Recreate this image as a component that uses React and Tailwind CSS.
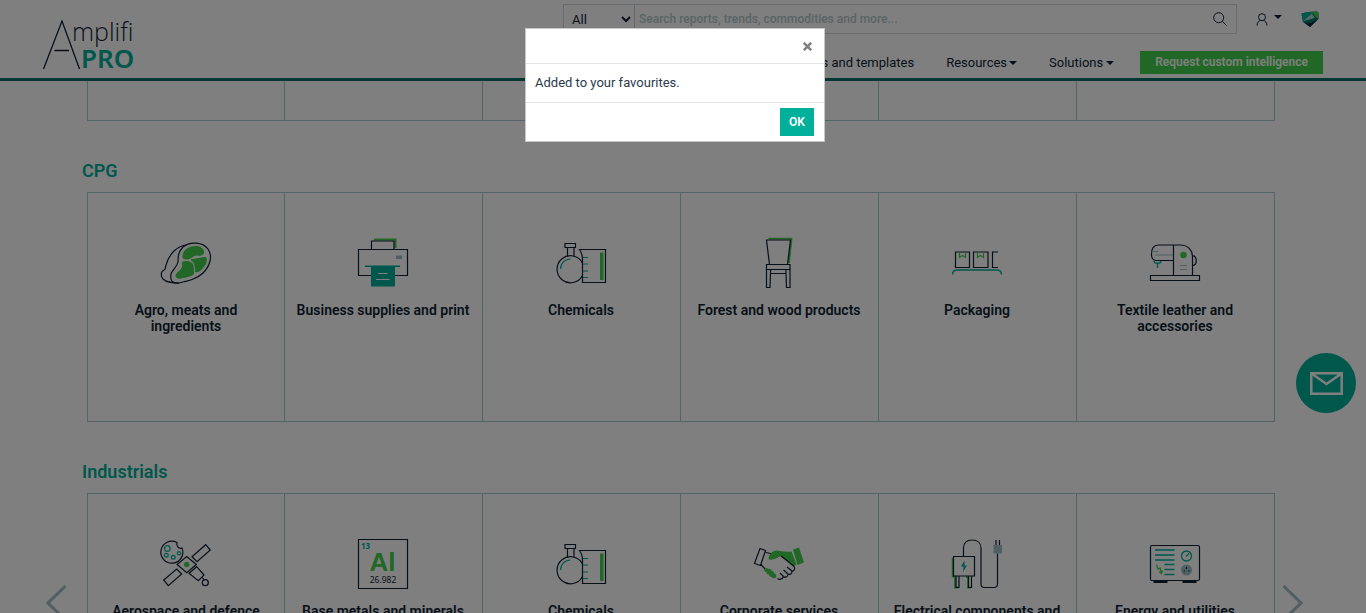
import React from "react";

const INK = "#0f1f33";
const TEAL = "#00b09b";
const GREEN = "#43cf4a";
const GREY = "#9fbfc6";

function Icon({ children }) {
  return (
    <svg
      aria-hidden="true"
      viewBox="0 0 50 50"
      className="h-[50px] w-[50px] shrink-0 overflow-visible"
      fill="none"
      stroke={INK}
      strokeWidth="1.200"
    >
      {children}
    </svg>
  );
}

const Steak = () => (
  <Icon>
    <path d="M22 9C29 3 42 4 47 11c5 7 2 17-5 24-6 6-15 8-24 10-7 1-9-3-8-9 1-4 6-7 7-12 0-5 0-10 5-15Z" />
    <path d="M25 7C16 8 8 16 5 27c-1 3 0 4-2 5-4 2-3 7-1 9 4 4 10 4 16 4" />
    <path
      d="M22 16c1-5 6-8 13-8 5 0 9 3 8 7-2 5-6 1-10 3-3 3-7 4-10 3-2-1-2-3-1-5Z"
      fill={GREEN}
      stroke="none"
    />
    <path
      d="M31 21c3 0 9-2 14-2 2 4 0 8-3 11-2 3-5 5-8 4 0-4 0-7-2-10-2-1-3-3-1-3Z"
      fill={GREEN}
      stroke="none"
    />
    <path
      d="M21 24c4-2 9-1 11 2 1 3 1 7 1 10-3 3-7 3-11 4-4 2-9 0-7-4 1-2 5-4 6-7 1-2-1-4 0-5Z"
      fill={GREEN}
      stroke="none"
    />
  </Icon>
);

const Printer = () => (
  <Icon>
    <path d="M16 1.500h21.500V10" stroke={GREEN} strokeWidth="2" />
    <path d="M13.500 11.500v-8.500h22.500v8.500" />
    <path d="M.5 11.500h49v26H.5Z" />
    <path d="M38 17.500h6v3.500h-6Z" fill={GREY} stroke="none" />
    <path d="M7 27.500h35v1.500H7Z" fill={TEAL} stroke="none" />
    <path d="M13 29h24v19.500H13Z" fill={TEAL} stroke="none" />
    <path d="M20 35.500h9.500M18 41.500h13.500" stroke="white" />
  </Icon>
);

const Chemistry = () => (
  <Icon>
    <path d="M26.500 25a13.500 13.500 0 1 0 0 12.500" />
    <path d="M11.500 18.500v-9h6.500v9M9 5.500h10.500v4H9Z" />
    <path d="M4.500 31a10 10 0 0 1 10-10" stroke={TEAL} />
    <path d="M23.500 11.500h26v33h-23V22c0-5-1-8-3-10.500Z" />
    <path d="M27 19.500h5M27 26h5M27 33h5M27 39.500h5" stroke={TEAL} />
    <path d="M44 14.500h3.500V42H44Z" fill={GREEN} stroke="none" />
  </Icon>
);

const Chair = () => (
  <Icon>
    <path d="M14.500 .7h23L35 25" stroke={GREEN} strokeWidth="1.800" />
    <path d="M12.500 2h24l-3 24.500h-18Z" />
    <path d="M12.500 26.500H36v5H12.500Z" />
    <path d="M12.500 31.500v18h3.500l.6-18M36 31.500v18h-3.500l-.6-18M16.500 35.500h16" />
  </Icon>
);

const Boxes = () => (
  <Icon>
    <path d="M3.500 14h14v15.500h-14ZM21.500 14h14.500v15.500H21.500ZM46 14h-5.500v15.500H46" />
    <path d="M7.500 14v5.500l3-2 3 2V14M25.500 14v5.500l3-2 3 2V14" stroke={GREEN} />
    <path d="M.5 36.500c0-3 2-4.500 5-4.500h39c3 0 5 1.500 5 4.500" stroke={TEAL} strokeWidth="1.400" />
  </Icon>
);

const SewingMachine = () => (
  <Icon>
    <path d="M23.500 22.500H6c-3 0-4.500-3-4.500-6C1.500 11 3 7 9 7h21c8 0 12.500 5 12.500 12v18.500M23.500 7v30.500" />
    <path d="M.5 37.500h49v5H.5Z" />
    <path d="M42.500 18c5-1 5 10 0 9.500" />
    <path d="M2 13.500h6.500M5 17h18M30 27.500h7M30 31.500h7" stroke={GREY} />
    <circle cx="33.500" cy="17" r="3.200" fill={GREEN} stroke="none" />
    <path d="M4 23c0 3 7 3 7 0M7.500 25.500V30" stroke={TEAL} strokeWidth="1.300" />
  </Icon>
);

const Satellite = () => (
  <Icon>
    <path d="M16 3.500A11 11 0 1 0 21 9c-3 1-6-1-5-5.500Z" />
    <g stroke={TEAL}>
      <circle cx="6.300" cy="9.500" r="2.800" />
      <circle cx="5.300" cy="16.300" r="1.900" />
      <circle cx="12.300" cy="18.300" r="1.900" />
      <circle cx="18" cy="14.300" r="1.700" />
    </g>
    <path d="m25.700 17.500 9.600 8-9.600 8.300-9.600-8.300Z" />
    <circle cx="25.700" cy="25.500" r="2.700" fill={GREEN} stroke="none" />
    <path d="m31 17.700 13.700-12 4.600 5.300L36 22.700Z" />
    <path d="m2.700 41 13-11 5 5L7.300 46.700Z" />
    <path d="m35.700 27.700 7.300 8.300-5.700 5.700-9.300-7.400ZM41 38l2 3" />
    <circle cx="44.300" cy="43.700" r="3" />
  </Icon>
);

const Aluminium = () => (
  <Icon>
    <path d="M.5 .5h49v49H.5Z" />
    <g stroke="none" className="font-['Noto_Sans',sans-serif]">
      <text x="3" y="9.500" fontSize="8" fontWeight="700" fill={TEAL}>
        13
      </text>
      <text
        x="24.500"
        y="32"
        fontSize="26"
        fontWeight="700"
        fill={GREEN}
        textAnchor="middle"
        className="font-['Liberation_Sans',sans-serif]"
      >
        Al
      </text>
      <text x="25" y="44" fontSize="8.500" fontWeight="400" fill={INK} textAnchor="middle">
        26.982
      </text>
    </g>
  </Icon>
);

const Handshake = () => (
  <Icon>
    <path d="m6 9.500 5.500 2-5 15-6-2Z" />
    <path d="m39 10.500 6-2 5 15-6.500 2.500Z" fill={GREEN} stroke="none" />
    <path
      d="M14.500 19c1-4 4-7 8-7.500 4 0 7 2 15 1l5 13-3 2C35 24 31 20 27 17c-3 1-5 3-9 3.500-2 .5-4 0-3.500-1.500Z"
      fill={GREEN}
      stroke="none"
    />
    <path d="M11.500 13.500 17 14.500M7 25.500l4 4.500" />
    <path
      d="M10 31c1-2 3-3 4-1 2-1 4 1 3.500 2 2 0 3 1 2.500 2.500 2 0 3 2 2 4-2 1-4 1-4-.5-2 0-3-1-3-2.500-2 0-3-1-2.500-2.500-1 0-2-1-2.500-2Z"
      fill={GREEN}
      stroke="none"
    />
    <path d="M27 17c4 3 9 7 13 10.500 1.500 2 0 5-2 4.500 0 3-2 4-4 3 0 3-3 4-4.500 2.500-1 3-4 3.500-6 2M38 32l-5-4M34 35l-4.500-4M29.500 37.500 26 34" />
  </Icon>
);

const Charger = () => (
  <Icon>
    <path d="M.7 19v18.500H3v11h3M14 38h2v10.500h3" stroke={GREEN} strokeWidth="1.800" />
    <path d="M1.500 17.500h21v19.500h-21ZM4 37v11.500h3V37M16.500 37v11.500h3V37" />
    <path d="M11.500 17.500V9c0-5 3-8 8.500-8s9 3 9 8v36c0 2 1.500 3.500 3.500 3.500h9.500c2 0 3.500-1 3.500-3.500V14.500" />
    <path d="M41.500 6h8.500v8.500h-8.500Z" fill={GREY} stroke="none" />
    <path d="M44 1v5M47.500 1v5" />
    <path d="m12.500 21.500-3.500 6h2.500l-.5 5.500 4-6.500h-2.500Z" fill={TEAL} stroke="none" />
  </Icon>
);

const Generator = () => (
  <Icon>
    <rect x=".5" y="6.500" width="49" height="35" rx="1.500" />
    <path d="M3.500 42h14v2h-14ZM32.500 42h14v2h-14Z" fill={INK} stroke="none" />
    <path d="M5 11h19.500M5 16h19.500M5 21h19.500M14.500 25.500h10M14.500 30.500h10M14.500 35.500h10" stroke={TEAL} strokeWidth="1.300" />
    <circle cx="36.500" cy="17" r="5" stroke={TEAL} strokeWidth="1.300" />
    <path d="m36 17.500 3-3" stroke={TEAL} strokeWidth="1.300" />
    <circle cx="36.500" cy="31" r="5.500" fill={GREY} stroke="none" />
    <path d="M33.500 32h1.500M38 32h1.500M36.500 28v2" />
    <path d="m6.500 25.500 1.500 4.500 2-1 1.500 5M9 32.500l2.500 2 1-3" stroke={GREEN} strokeWidth="1.300" />
  </Icon>
);

const CPG = [
  ["Agro, meats and ingredients", Steak],
  ["Business supplies and print", Printer],
  ["Chemicals", Chemistry],
  ["Forest and wood products", Chair],
  ["Packaging", Boxes],
  ["Textile leather and accessories", SewingMachine],
];

const INDUSTRIALS = [
  ["Aerospace and defence", Satellite],
  ["Base metals and minerals", Aluminium],
  ["Chemicals", Chemistry],
  ["Corporate services", Handshake],
  ["Electrical components and equipment", Charger],
  ["Energy and utilities", Generator],
];

function Card({ title, Art }) {
  return (
    <a
      href="#"
      className="flex h-[228px] flex-col items-center gap-[14px] border-r border-[#a9c9cf] pt-[45px] pr-px text-center text-sm leading-4 font-semibold text-[#0f1f33] first:border-l first:pr-0"
    >
      <Art />
      <span className="max-w-[175px]">{title}</span>
    </a>
  );
}

function Section({ title, items, children }) {
  return (
    <section className="mb-[38px]">
      <h2 className="mb-[9px] text-lg leading-6 font-semibold text-[#00b09b]">{title}</h2>
      <div className="relative ml-[5px]">
        <div className="grid grid-cols-6 border-y border-[#a9c9cf]">
          {items.map(([name, Art]) => (
            <Card key={name} title={name} Art={Art} />
          ))}
        </div>
        {children}
      </div>
    </section>
  );
}

function Caret() {
  return (
    <svg aria-hidden="true" viewBox="0 0 8 4" className="h-1 w-2" fill={INK}>
      <path d="M0 0h8L4 4Z" />
    </svg>
  );
}

function Logo() {
  return (
    <svg role="img" aria-label="Amplifi PRO" viewBox="0 0 92 52" className="h-[52px] w-[92px] overflow-visible">
      <path d="M.5 51 19 3l17.500 48M11.500 32.500H26" fill="none" stroke={INK} strokeWidth="1.300" />
      <text x="29" y="23" fontSize="25" fontWeight="300" fill={INK} className="font-['Open_Sans',sans-serif]">
        mplifi
      </text>
      <text x="38" y="50" fontSize="26" fontWeight="600" fill={TEAL} className="font-['Noto_Sans',sans-serif]">
        PRO
      </text>
    </svg>
  );
}

function Header() {
  return (
    <header className="z-10 flex h-[81px] shrink-0 justify-between border-b-[3px] border-[#007269] bg-white px-[43px] text-[13px] text-[#0f1f33]">
      <a href="#" className="pt-[18px]">
        <Logo />
      </a>
      <div className="flex flex-col items-end pt-1">
        <div className="flex items-center">
          <form className="flex h-[30px] w-[674px] items-center border border-[#d5dade]">
            <select aria-label="Category" className="h-7 w-[71px] border-r border-[#c0d4d8] bg-white pl-1">
              <option>All</option>
            </select>
            <input
              type="search"
              aria-label="Search"
              placeholder="Search reports, trends, commodities and more..."
              className="h-7 flex-1 px-1 text-xs font-medium outline-none placeholder:text-[#b4c8cc]"
            />
            <button type="button" aria-label="Search" className="mr-[9px]">
              <svg viewBox="0 0 14 14" className="h-[14px] w-[14px]" fill="none" stroke={INK} strokeWidth="1">
                <circle cx="5.700" cy="5.700" r="5" />
                <path d="m9.300 9.300 4.200 4.200" />
              </svg>
            </button>
          </form>
          <button type="button" aria-label="Account" className="ml-[19px] flex items-center gap-[6px]">
            <svg viewBox="0 0 12 13" className="h-[13px] w-3" fill="none" stroke={INK} strokeWidth="1">
              <circle cx="6" cy="4.200" r="3.500" />
              <path d="M1 12.500C1.200 9 3 7.700 4.700 7.400M11 12.500c-.2-3.500-2-4.800-3.700-5.100" />
            </svg>
            <span className="pb-1">
              <Caret />
            </span>
          </button>
          <a href="#" aria-label="Home" className="mr-1 ml-[19px]">
            <svg viewBox="0 0 18 16" className="h-4 w-[18px]">
              <path d="M.5 2.500 7 1l9-.5 1.500 1V8L9 16l-7-5Z" fill="#00665a" />
              <path d="m.5 2.500 7-1.500L14 .8 9 5 2 11Z" fill="#00b09b" />
              <path d="m2 10.500 9-8 3 4.500Z" fill="#a8d8d0" />
              <path d="m11 .7 5-.2 1.500 1V8l-3-2Z" fill="#43cf4a" />
              <path d="m2 10.500 12-3.500 1 1-6 4.500Z" fill="#007a6c" />
              <path d="m4 12 5 .5 7-3.500L9 16Z" fill="#0f1f33" />
            </svg>
          </a>
        </div>
        <nav className="mt-[17px] flex items-center leading-[23px]">
          <a href="#" className="mr-8">
            Models and templates
          </a>
          <a href="#" className="mr-8 flex items-center gap-[2px]">
            Resources
            <Caret />
          </a>
          <a href="#" className="mr-[26px] flex items-center gap-[3px]">
            Solutions
            <Caret />
          </a>
          <a href="#" className="bg-[#43cf4a] px-[15px] text-xs leading-[23px] font-semibold text-white">
            Request custom intelligence
          </a>
        </nav>
      </div>
    </header>
  );
}

function Dialog() {
  return (
    <div className="fixed inset-0 z-20 flex items-start justify-center bg-black/50 pt-7 pr-4">
      <div
        role="dialog"
        aria-modal="true"
        aria-labelledby="dialog-text"
        className="w-[300px] border border-[#c8c8c8] bg-white text-[13px] text-[#2b3a4c]"
      >
        <div className="flex h-[35px] items-center justify-end border-b border-[#e5e5e5] px-3">
          <button type="button" aria-label="Close">
            <svg viewBox="0 0 9 9" className="h-[9px] w-[9px]" fill="none" stroke="#808080" strokeWidth="2.600">
              <path d="m.8 .8 7.400 7.400M8.200 .8.8 8.200" />
            </svg>
          </button>
        </div>
        <p id="dialog-text" className="border-b border-[#e5e5e5] p-[9px] leading-5">
          Added to your favourites.
        </p>
        <div className="flex justify-end px-[10px] py-[5px]">
          <button type="button" className="h-7 w-[34px] bg-[#00b09b] text-xs font-semibold text-white">
            OK
          </button>
        </div>
      </div>
    </div>
  );
}

function Arrow({ label, d, side }) {
  return (
    <button type="button" aria-label={label} className={`absolute top-[92px] ${side}`}>
      <svg viewBox="0 0 21 36" className="h-9 w-[21px]" fill="none" stroke={GREY} strokeWidth="3">
        <path d={d} />
      </svg>
    </button>
  );
}

export default function App() {
  return (
    <div className="flex h-screen flex-col overflow-hidden bg-white font-[Roboto,sans-serif]">
      <Header />
      <main className="min-h-0 flex-1 overflow-hidden pr-[91px] pl-[82px]">
        <div className="mb-[38px] ml-[5px] grid h-10 grid-cols-6 border-b border-[#a9c9cf]">
          {CPG.map(([name]) => (
            <div key={name} className="border-r border-[#a9c9cf] first:border-l" />
          ))}
        </div>
        <Section title="CPG" items={CPG} />
        <Section title="Industrials" items={INDUSTRIALS}>
          <Arrow label="Previous" side="-left-[41px]" d="M19.500 1 2 18l17.500 17" />
          <Arrow label="Next" side="-right-[28px]" d="M1.500 1 19 18 1.500 35" />
        </Section>
      </main>
      <button
        type="button"
        aria-label="Contact us"
        className="fixed top-[353px] right-[10px] z-10 flex h-[60px] w-[60px] items-center justify-center rounded-full bg-[#00b09b]"
      >
        <svg viewBox="0 0 33 23" className="h-[23px] w-[33px]" fill="none" stroke="white" strokeWidth="2.500">
          <path d="M1.300 1.300h30.400v20.400H1.300ZM1.500 1.500l15 10.500 15-10.500" />
        </svg>
      </button>
      <Dialog />
    </div>
  );
}
